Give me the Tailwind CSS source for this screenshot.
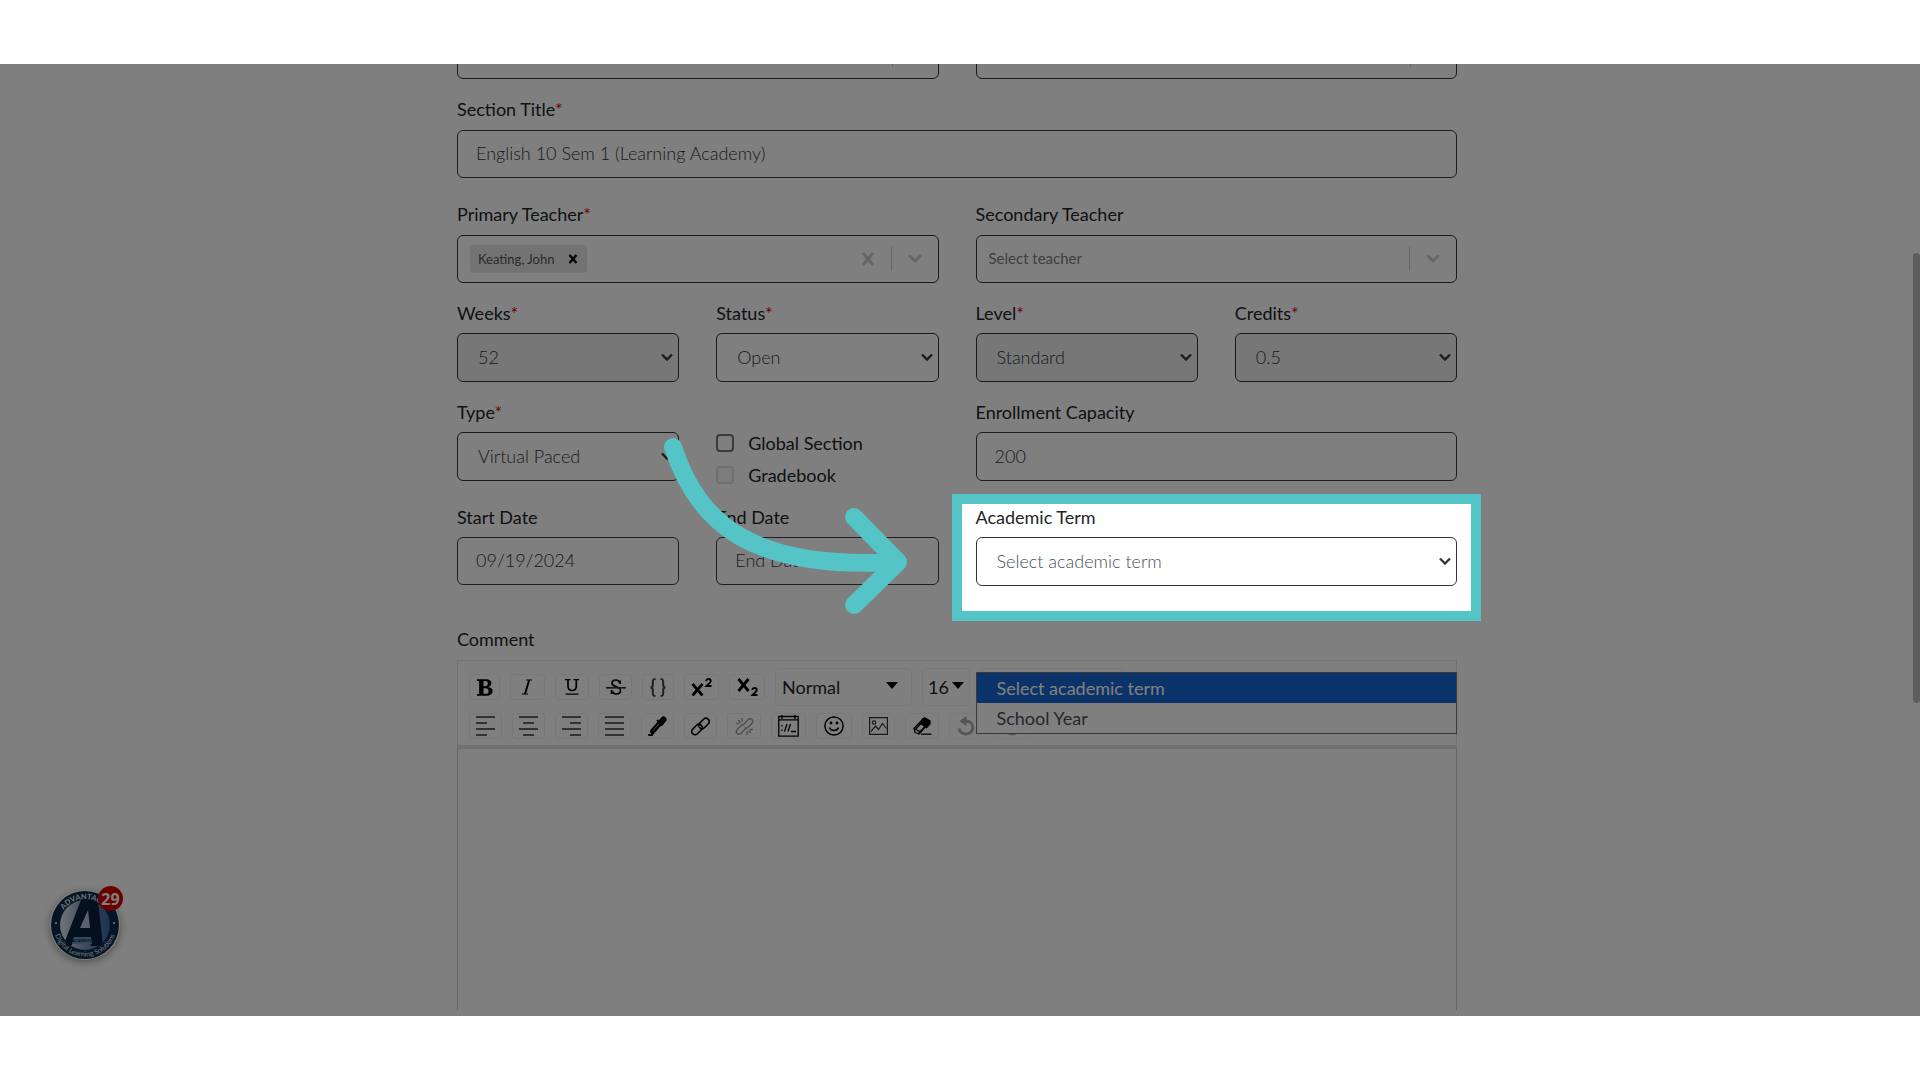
<!DOCTYPE html>
<html lang="en">
<head>
    <meta charset="UTF-8">
    <meta name="viewport" content="width=device-width, initial-scale=1.0">
    <title>Edit Section</title>
    <script src="https://cdn.jsdelivr.net/npm/@tailwindcss/browser@4"></script>
</head>
<body class="h-screen flex flex-col bg-white py-16 font-['Lato','Open_Sans',sans-serif] text-lg leading-7 text-[#212529]">

    <main class="relative flex-1 min-h-0 overflow-hidden bg-white pr-[6px]">
        <form class="mx-auto h-full w-full max-w-[1000px] flex flex-col pb-[6px]">

            <!-- Course row, scrolled almost out of view -->
            <div class="grid grid-cols-2 gap-x-[37px] -mt-[33px] shrink-0">
                <div class="flex h-12 items-center rounded-md border border-[#333] pl-3 text-base text-[#666]">
                    <span class="flex-1">English Language Arts</span>
                    <span class="h-6 w-px bg-[#ccc] mr-[45px]"></span>
                </div>
                <div class="flex h-12 items-center rounded-md border border-[#333] pl-3 text-base text-[#666]">
                    <span class="flex-1">English 10</span>
                    <span class="h-6 w-px bg-[#ccc] mr-[45px]"></span>
                </div>
            </div>

            <!-- Section title -->
            <div class="mt-4 flex flex-col gap-[7px]">
                <label for="title">Section Title<span class="text-[#e00000]">*</span></label>
                <input id="title" type="text" value="English 10 Sem 1 (Learning Academy)" class="h-12 w-full rounded-md border border-[#3c3c4a] px-[18px] pb-[2px] font-light text-[#30363c]">
            </div>

            <!-- Teachers -->
            <div class="mt-[22px] grid grid-cols-2 gap-x-[37px]">
                <div class="flex flex-col gap-[7px]">
                    <label for="primary">Primary Teacher<span class="text-[#e00000]">*</span></label>
                    <div class="flex h-12 items-center rounded-md border border-[#333] pl-3">
                        <span class="flex h-7 items-center gap-[14px] rounded-sm bg-[#e6e6e6] pl-2 pr-[9px] text-[13px] text-[#555]">
                            Keating, John
                            <button type="button" aria-label="Remove Keating, John">
                                <svg class="size-[10px]" viewBox="0 0 10 10" fill="none" stroke="#000" stroke-width="2.4"><path d="M1.5 1l7 8M8.5 1l-7 8"/></svg>
                            </button>
                        </span>
                        <input id="primary" type="text" class="min-w-0 flex-1">
                        <button type="button" aria-label="Clear">
                            <svg class="size-[14px]" viewBox="0 0 14 14" fill="none" stroke="#ccc" stroke-width="3"><path d="M2 1l10 12M12 1L2 13"/></svg>
                        </button>
                        <span class="mx-4 h-6 w-px bg-[#ccc]"></span>
                        <svg class="mr-4 h-[10px] w-[14px]" viewBox="0 0 14 10" fill="none" stroke="#ccc" stroke-width="3" stroke-linecap="round"><path d="M2 2l5 5 5-5"/></svg>
                    </div>
                </div>
                <div class="flex flex-col gap-[7px]">
                    <label for="secondary">Secondary Teacher</label>
                    <div class="flex h-12 items-center rounded-md border border-[#333] pl-3">
                        <input id="secondary" type="text" placeholder="Select teacher" class="min-w-0 flex-1 pb-[2px] text-[15px] placeholder:text-[#808080]">
                        <span class="mx-4 h-6 w-px bg-[#ccc]"></span>
                        <svg class="mr-4 h-[10px] w-[14px]" viewBox="0 0 14 10" fill="none" stroke="#ccc" stroke-width="3" stroke-linecap="round"><path d="M2 2l5 5 5-5"/></svg>
                    </div>
                </div>
            </div>

            <!-- Weeks, status, level, credits -->
            <div class="mt-4 grid grid-cols-4 gap-x-[37px]">
                <div class="flex flex-col gap-[6px]">
                    <label for="weeks">Weeks<span class="text-[#e00000]">*</span></label>
                    <div class="relative">
                        <select id="weeks" disabled class="h-[49px] w-full appearance-none rounded-md border border-[#333] bg-[#efefef] px-5 pb-[2px] font-light text-[#30363c] opacity-100"><option>52</option></select>
                        <svg class="absolute right-[6px] top-5 h-[9px] w-[12px]" viewBox="0 0 12 9" fill="none" stroke="#343a40" stroke-width="2.4"><path d="M1 1.5l5 5 5-5"/></svg>
                    </div>
                </div>
                <div class="flex flex-col gap-[6px]">
                    <label for="status">Status<span class="text-[#e00000]">*</span></label>
                    <div class="relative">
                        <select id="status" class="h-[49px] w-full appearance-none rounded-md border border-[#333] bg-white px-5 pb-[2px] font-light text-[#30363c]"><option>Open</option></select>
                        <svg class="absolute right-[6px] top-5 h-[9px] w-[12px]" viewBox="0 0 12 9" fill="none" stroke="#343a40" stroke-width="2.4"><path d="M1 1.5l5 5 5-5"/></svg>
                    </div>
                </div>
                <div class="flex flex-col gap-[6px]">
                    <label for="level">Level<span class="text-[#e00000]">*</span></label>
                    <div class="relative">
                        <select id="level" disabled class="h-[49px] w-full appearance-none rounded-md border border-[#333] bg-[#efefef] px-5 pb-[2px] font-light text-[#30363c] opacity-100"><option>Standard</option></select>
                        <svg class="absolute right-[6px] top-5 h-[9px] w-[12px]" viewBox="0 0 12 9" fill="none" stroke="#343a40" stroke-width="2.4"><path d="M1 1.5l5 5 5-5"/></svg>
                    </div>
                </div>
                <div class="flex flex-col gap-[6px]">
                    <label for="credits">Credits<span class="text-[#e00000]">*</span></label>
                    <div class="relative">
                        <select id="credits" disabled class="h-[49px] w-full appearance-none rounded-md border border-[#333] bg-[#efefef] px-5 pb-[2px] font-light text-[#30363c] opacity-100"><option>0.5</option></select>
                        <svg class="absolute right-[6px] top-5 h-[9px] w-[12px]" viewBox="0 0 12 9" fill="none" stroke="#343a40" stroke-width="2.4"><path d="M1 1.5l5 5 5-5"/></svg>
                    </div>
                </div>
            </div>

            <!-- Type, flags, capacity -->
            <div class="mt-4 grid grid-cols-4 gap-x-[37px]">
                <div class="flex flex-col gap-[6px]">
                    <label for="type">Type<span class="text-[#e00000]">*</span></label>
                    <div class="relative">
                        <select id="type" class="h-[49px] w-full appearance-none rounded-md border border-[#333] bg-white px-5 pb-[2px] font-light text-[#30363c]"><option>Virtual Paced</option></select>
                        <svg class="absolute right-[6px] top-5 h-[9px] w-[12px]" viewBox="0 0 12 9" fill="none" stroke="#343a40" stroke-width="2.4"><path d="M1 1.5l5 5 5-5"/></svg>
                    </div>
                </div>
                <div class="-mb-3 flex flex-col gap-1 pt-[31px]">
                    <label class="flex items-center gap-[14px]">
                        <input type="checkbox" class="size-[18px] appearance-none rounded-sm border-2 border-[#777] bg-white">
                        Global Section
                    </label>
                    <label class="flex items-center gap-[14px]">
                        <input type="checkbox" disabled class="size-[18px] appearance-none rounded-sm border-2 border-[#dedede] bg-[#f8f8f8]">
                        Gradebook
                    </label>
                </div>
                <div class="col-span-2 flex flex-col gap-[6px]">
                    <label for="capacity">Enrollment Capacity</label>
                    <input id="capacity" type="text" value="200" class="h-[49px] w-full rounded-md border border-[#3c3c4a] px-[18px] pb-[2px] font-light text-[#30363c]">
                </div>
            </div>

            <!-- Dates and academic term -->
            <div class="mt-[22px] grid grid-cols-4 gap-x-[37px]">
                <div class="flex flex-col gap-[6px]">
                    <label for="start">Start Date</label>
                    <input id="start" type="text" value="09/19/2024" class="h-12 w-full rounded-md border border-[#3c3c4a] px-[18px] pb-[2px] font-light text-[#30363c]">
                </div>
                <div class="flex flex-col gap-[6px]">
                    <label for="end">End Date</label>
                    <input id="end" type="text" placeholder="End Date" class="h-12 w-full rounded-md border border-[#3c3c4a] px-[18px] pb-[2px] font-light placeholder:text-[#30363c]">
                </div>
                <div class="relative col-span-2 flex flex-col gap-[6px]">
                    <label for="term">Academic Term</label>
                    <div class="relative">
                        <select id="term" class="h-[49px] w-full appearance-none rounded-md border border-[#333] bg-white px-5 pb-[2px] font-light text-[#495057]">
                            <option>Select academic term</option>
                            <option>School Year</option>
                        </select>
                        <svg class="absolute right-[6px] top-5 h-[9px] w-[12px]" viewBox="0 0 12 9" fill="none" stroke="#343a40" stroke-width="2.4"><path d="M1 1.5l5 5 5-5"/></svg>
                    </div>

                    <!-- Open option list -->
                    <ul class="absolute inset-x-0 top-[169px] z-10 border border-[#767676] bg-white">
                        <li class="bg-[#1967d2] px-5 h-[30px] leading-[30px] text-white">Select academic term</li>
                        <li class="px-5 h-[30px] leading-[30px] text-[#495057]">School Year</li>
                    </ul>

                    <!-- Spotlight: the shadow dims everything outside the frame -->
                    <div class="pointer-events-none absolute -left-[14px] -right-[14px] top-[1px] h-[107px] z-20 shadow-[0_0_0_4000px_rgba(0,0,0,0.5)]"></div>
                    <div class="pointer-events-none absolute -inset-x-6 -top-[9px] h-[127px] z-30 border-[10px] border-[#54c4c7]"></div>
                    <svg class="pointer-events-none absolute -left-[316px] -top-[68px] z-30 h-[182px] w-[252px]" viewBox="660 435 252 182" fill="none" stroke="#54c4c7" stroke-width="18" stroke-linecap="round" stroke-linejoin="round">
                        <path d="M673 447C698 524 752 570 896 562M854 517l44 45-44 43"/>
                    </svg>
                </div>
            </div>

            <!-- Comment editor -->
            <div class="mt-[39px] flex min-h-0 flex-1 flex-col">
                <label for="comment" class="mb-[7px]">Comment</label>
                <div class="flex shrink-0 flex-col gap-[7px] border border-b-4 border-[#e2e2e2] px-[11px] pb-[6px] pt-[7px]">
                    <div class="flex items-center gap-[10px]">
                        <button type="button" aria-label="Bold" class="grid h-[26px] w-[31px] place-items-center rounded-sm border border-[#f1f1f1]">
                            <svg class="h-[17px] w-4" viewBox="0 0 12 13" preserveAspectRatio="none"><path d="M7.99 6.2c1.6-.3 2.8-1.3 2.8-3C10.8 1 9 .2 6.6.2H0v1.3h1.6v10H0v1.3h7.1c2.6 0 4.6-1.1 4.6-3.6 0-1.800-1.300-2.800-3.710-3zM4.900 1.600h1.300c1.200 0 1.900.5 1.900 1.900 0 1.500-.8 2.100-2 2.100H4.900zM6.400 11.300H4.900V7h1.500c1.500 0 2.300.6 2.300 2.100s-.9 2.200-2.300 2.200z"/></svg>
                        </button>
                        <button type="button" aria-label="Italic" class="grid h-[26px] w-[35px] place-items-center rounded-sm border border-[#f1f1f1]">
                            <svg class="h-4 w-3" viewBox="0 0 12 16" fill="none" stroke="#000"><path d="M4 1h6M0 15h6" stroke-width="1.200"/><path d="M7.200 1L3 15" stroke-width="2"/></svg>
                        </button>
                        <button type="button" aria-label="Underline" class="grid h-[26px] w-[34px] place-items-center rounded-sm border border-[#f1f1f1]">
                            <svg class="h-4 w-[14px]" viewBox="0 0 14 16" fill="none" stroke="#000"><path d="M0 .7h5.500M8.500.7H14M.5 15.200h13" stroke-width="1.200"/><path d="M3 .7V7c0 3 1.500 4.500 4.200 4.500S11.300 10 11.300 7V.7" stroke-width="1.700"/></svg>
                        </button>
                        <button type="button" aria-label="Strikethrough" class="grid h-[26px] w-[33px] place-items-center rounded-sm border border-[#f1f1f1]">
                            <svg class="h-4 w-5" viewBox="0 0 20 16" fill="none" stroke="#000" stroke-width="1.700"><path d="M14 5V1.500M14 4C13 1.700 12 1 10 1 7.500 1 6 2.200 6 4.200 6 8 14.500 7 14.500 11.500c0 2.300-1.700 3.500-4.300 3.500-2 0-3.500-1-4.200-3M5.500 15v-4"/><path d="M0 8.800h20" stroke="#333"/></svg>
                        </button>
                        <button type="button" aria-label="Monospace" class="grid h-[26px] w-[32px] place-items-center rounded-sm border border-[#f1f1f1]">
                            <svg class="h-[19px] w-4" viewBox="0 0 16 19" fill="none" stroke="#444" stroke-width="2"><path d="M5.500 1C3 1 2.800 2 2.800 4v3c0 1.700-.6 2.500-2.300 2.500 1.700 0 2.300.8 2.300 2.500v3c0 2 .2 3 2.700 3M10.500 1c2.500 0 2.700 1 2.700 3v3c0 1.700.6 2.500 2.300 2.500-1.700 0-2.300.8-2.300 2.500v3c0 2-.2 3-2.700 3"/></svg>
                        </button>
                        <button type="button" aria-label="Superscript" class="grid h-[26px] w-[35px] place-items-center rounded-sm border border-[#f1f1f1]">
                            <svg class="h-[18px] w-[21px]" viewBox="0 0 21 18" fill="none" stroke="#000" stroke-width="2.800"><path d="M1.500 6l10 11.500M11.500 6l-10 11.500"/><path d="M15 3c.4-1.400 1.400-2 2.500-2 1.400 0 2.300.8 2.300 2 0 1.500-2 2.700-4.300 5H20.500" stroke-width="1.800"/></svg>
                        </button>
                        <button type="button" aria-label="Subscript" class="grid h-[26px] w-[36px] place-items-center rounded-sm border border-[#f1f1f1]">
                            <svg class="h-[18px] w-[21px]" viewBox="0 0 21 18" fill="none" stroke="#000" stroke-width="2.800"><path d="M1.500 1l10 12M11.500 1l-10 12"/><path d="M15 12c.4-1.400 1.400-2 2.500-2 1.400 0 2.300.8 2.300 2 0 1.500-2 2.700-4.300 5H20.500" stroke-width="1.800"/></svg>
                        </button>
                        <button type="button" class="flex h-[38px] w-[137px] items-center justify-between rounded-sm border border-[#f1f1f1] pl-[6px] pr-[13px]">
                            Normal
                            <svg class="mb-1 h-[7px] w-3" viewBox="0 0 12 7"><path d="M0 0h12L6 7z"/></svg>
                        </button>
                        <button type="button" class="flex h-[38px] w-[48px] items-center justify-between rounded-sm border border-[#f1f1f1] pl-[5px] pr-[5px]">
                            16
                            <svg class="mb-1 h-[7px] w-3" viewBox="0 0 12 7"><path d="M0 0h12L6 7z"/></svg>
                        </button>
                        <button type="button" aria-label="Font" class="h-[38px] w-[144px] rounded-sm border border-[#f1f1f1]"></button>
                    </div>
                    <div class="flex items-center gap-[10px]">
                        <button type="button" aria-label="Align left" class="grid h-[26px] w-[33px] place-items-center rounded-sm border border-[#f1f1f1]">
                            <svg class="h-5 w-[19px]" viewBox="0 0 19 20" stroke="#333" stroke-width="1.600"><path d="M0 1h19M0 7h11M0 13h19M0 19h11"/></svg>
                        </button>
                        <button type="button" aria-label="Align center" class="grid h-[26px] w-[33px] place-items-center rounded-sm border border-[#f1f1f1]">
                            <svg class="h-5 w-[19px]" viewBox="0 0 19 20" stroke="#333" stroke-width="1.600"><path d="M0 1h19M4 7h11M0 13h19M4 19h11"/></svg>
                        </button>
                        <button type="button" aria-label="Align right" class="grid h-[26px] w-[33px] place-items-center rounded-sm border border-[#f1f1f1]">
                            <svg class="h-5 w-[19px]" viewBox="0 0 19 20" stroke="#333" stroke-width="1.600"><path d="M0 1h19M8 7h11M0 13h19M8 19h11"/></svg>
                        </button>
                        <button type="button" aria-label="Justify" class="grid h-[26px] w-[33px] place-items-center rounded-sm border border-[#f1f1f1]">
                            <svg class="h-5 w-[19px]" viewBox="0 0 19 20" stroke="#333" stroke-width="1.600"><path d="M0 1h19M0 7h19M0 13h19M0 19h19"/></svg>
                        </button>
                        <button type="button" aria-label="Text color" class="grid h-[26px] w-[33px] place-items-center rounded-sm border border-[#f1f1f1]">
                            <svg class="h-5 w-[19px]" viewBox="0 0 19 20" fill="none" stroke="#000" stroke-linecap="round"><path d="M15.500 3.500l-3 3.500" stroke-width="6"/><path d="M9.500 4.500l5 4" stroke-width="1.800"/><path d="M11 8l-6.500 7.500" stroke-width="5"/><path d="M10.500 8.500l-5.500 6" stroke="#999" stroke-width="1"/><path d="M1 19h3l1-2" stroke-width="1.800"/></svg>
                        </button>
                        <button type="button" aria-label="Link" class="grid h-[26px] w-[33px] place-items-center rounded-sm border border-[#f1f1f1]">
                            <svg class="size-[19px]" viewBox="0 0 19 19" fill="none" stroke="#000" stroke-width="1.600"><rect x="7" y="3.200" width="12" height="6.600" rx="3.300" transform="rotate(-45 13 6.500)"/><rect x="0" y="9.200" width="12" height="6.600" rx="3.300" transform="rotate(-45 6 12.500)"/></svg>
                        </button>
                        <button type="button" aria-label="Unlink" disabled class="grid h-[26px] w-[34px] place-items-center rounded-sm border border-[#f1f1f1]">
                            <svg class="size-[19px]" viewBox="0 0 19 19" fill="none" stroke="#a0a0a0" stroke-width="1.500"><path d="M8.500 7.500L13 2.800c1.500-1.500 3-1.200 4 0s1 2.500-.4 4l-3.600 3.500c-1 1-2.200 1.100-3.200.4M10.500 11.500L6 16.200c-1.500 1.500-3 1.200-4 0s-1-2.500.4-4L6 8.700c1-1 2.200-1.100 3.200-.4M7 1v3.500M3 3l2.500 2.500M1 6.500h3.500M12 18v-3.500M16 16l-2.500-2.500M18 12.500h-3.500"/></svg>
                        </button>
                        <button type="button" aria-label="Embed" class="grid h-[26px] w-[35px] place-items-center rounded-sm border border-[#f1f1f1]">
                            <svg class="h-[22px] w-[21px]" viewBox="0 0 21 22" fill="none" stroke="#000" stroke-width="1.300"><path d="M.8 1.500h19.400v19.700H.8zM.8 4.800h19.400M4 0v4M17 0v4"/><path d="M4 10v1.500M4 14.500v1.500M9 9l-2.500 7.500M12.500 9L10 16.500M13 16.500h5"/></svg>
                        </button>
                        <button type="button" aria-label="Emoji" class="grid h-[26px] w-[36px] place-items-center rounded-sm border border-[#f1f1f1]">
                            <svg class="size-5" viewBox="0 0 20 20" fill="none" stroke="#000" stroke-width="1.500"><circle cx="10" cy="10" r="9.100"/><path d="M5.500 11.500c1.200 4 7.800 4 9 0"/><circle cx="7" cy="7" r=".7"/><circle cx="13" cy="7" r=".7"/></svg>
                        </button>
                        <button type="button" aria-label="Image" class="grid h-[26px] w-[33px] place-items-center rounded-sm border border-[#f1f1f1]">
                            <svg class="h-[18px] w-[19px]" viewBox="0 0 19 18" fill="none" stroke="#333" stroke-width="1.200"><path d="M.6.6h17.800v16.800H.6zM2 14.500L6.500 9l3 3.500 4-6 4 5"/><circle cx="5" cy="5.500" r="1.700"/></svg>
                        </button>
                        <button type="button" aria-label="Eraser" class="grid h-[26px] w-[34px] place-items-center rounded-sm border border-[#f1f1f1]">
                            <svg class="h-[18px] w-[19px]" viewBox="0 0 19 18" fill="none" stroke="#000" stroke-width="1.300" stroke-linejoin="round"><path d="M9.500 2.200l2-1.500 5.500 3v3l-3.500 4-5.500-4z" fill="#000"/><path d="M10.500 1.500L1 11.500l1 4 4 1.500 8-9M2.500 12.500l7-8M6 16l6-6.500M1.500 12l4.500 2v3"/><path d="M8 17.200h10.500" stroke="#333" stroke-width="1.600"/></svg>
                        </button>
                        <button type="button" aria-label="Undo" disabled class="grid h-[26px] w-[33px] place-items-center rounded-sm border border-[#f6f6f6]">
                            <svg class="h-5 w-[18px]" viewBox="0 0 18 20" fill="none" stroke="#aaa" stroke-width="2.800"><path d="M2 12.500a7 6.500 0 1 0 7-7.500"/><path d="M9.500 0v10L2.500 5z" fill="#aaa" stroke="none"/></svg>
                        </button>
                        <button type="button" aria-label="Redo" disabled class="grid h-[26px] w-[39px] place-items-center rounded-sm border border-[#f6f6f6]">
                            <svg class="h-5 w-[18px]" viewBox="0 0 18 20" fill="none" stroke="#aaa" stroke-width="2.800"><path d="M16 12.500a7 6.500 0 1 1-7-7.500"/><path d="M8.500 0v10l7-5z" fill="#aaa" stroke="none"/></svg>
                        </button>
                    </div>
                </div>
                <textarea id="comment" class="min-h-0 flex-1 resize-none border-x border-[#ccc]"></textarea>
            </div>
        </form>

        <!-- Scrollbar thumb -->
        <div class="absolute right-0 top-[189px] h-[450px] w-[7px] rounded-full bg-[#bdbdbd]"></div>

        <!-- Help widget -->
        <button type="button" aria-label="Notifications" class="absolute bottom-14 left-[50px] z-10 size-[70px] rounded-full bg-white shadow-[0_2px_8px_rgba(0,0,0,0.4)]">
            <svg class="size-full" viewBox="0 0 70 70">
                <defs>
                    <linearGradient id="disc" x1="0" y1="0" x2="1" y2="0">
                        <stop offset="0" stop-color="#e4eaf2"/>
                        <stop offset=".55" stop-color="#6f8fb8"/>
                        <stop offset="1" stop-color="#3a62a0"/>
                    </linearGradient>
                    <path id="arcTop" d="M9 35a26 26 0 0 1 52 0"/>
                    <path id="arcBottom" d="M3.500 35a31.500 31.500 0 0 0 63 0"/>
                </defs>
                <circle cx="35" cy="35" r="34" fill="#0a2a4a"/>
                <circle cx="35" cy="35" r="25" fill="url(#disc)"/>
                <path d="M31 10h17l5 46H41l-1-9H26l-5 9H13z" fill="#08203c"/>
                <path d="M38 20l2 18H30z" fill="#b4c4da"/>
                <path d="M24 47h17l1 7H22z" fill="#6f8fb8"/>
                <text x="32" y="52" text-anchor="middle" font-size="4" font-weight="700" fill="#08203c">ACADEMY</text>
                <circle cx="6" cy="33" r="1" fill="#fff"/>
                <circle cx="64" cy="33" r="1" fill="#fff"/>
                <text font-size="7.500" font-weight="700" fill="#dfe6ee"><textPath href="#arcTop" startOffset="50%" text-anchor="middle">ADVANTAGES</textPath></text>
                <text font-size="7" fill="#dfe6ee"><textPath href="#arcBottom" startOffset="50%" text-anchor="middle">Digital Learning Solutions</textPath></text>
            </svg>
            <span class="absolute -right-[3px] -top-1 grid size-[25px] place-items-center rounded-full bg-[#d60000] font-['Open_Sans',sans-serif] text-base font-bold text-white">29</span>
        </button>
    </main>

</body>
</html>
